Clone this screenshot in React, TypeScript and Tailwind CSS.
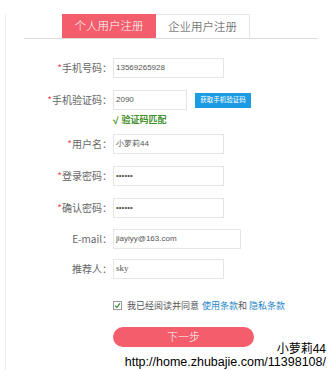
import React from "react";

const cjk = "font-['Microsoft_YaHei','Noto_Sans_CJK_SC',sans-serif]";

function Row({
  label,
  req,
  value,
  w = "w-[111px]",
  mt,
  serif,
}: {
  label: string;
  req?: boolean;
  value: string;
  w?: string;
  mt: string;
  serif?: boolean;
}) {
  return (
    <div className={`flex items-center ${mt}`}>
      <div className="w-[107px] pr-[1px] text-right text-[10px] leading-none text-[#666]">
        {req && <span className="text-[#e94b5b]">*</span>}
        {label}
      </div>
      <div
        className={`${w} h-[20px] border border-[#e6e6e6] flex items-center pl-[2px] text-[8px] text-[#555] ${
          serif ? "font-['Liberation_Serif',serif] text-[9px]" : "font-['Liberation_Sans',sans-serif]"
        }`}
      >
        {value}
      </div>
    </div>
  );
}

export default function App() {
  return (
    <div className={`relative w-[336px] h-[370px] bg-white overflow-hidden ${cjk}`}>
      <div className="ml-[5px] h-[370px] border-l border-[#f0f0f0]">
        {/* tabs */}
        <div className="mx-[18px] mt-[14px] border-b border-[#dcdcdc] flex pl-[38px]">
          <div className="w-[94px] h-[24px] bg-[#f45d6b] text-white text-[11.5px] font-light flex items-center justify-center">
            个人用户注册
          </div>
          <div className="w-[94px] h-[24px] border-t border-r border-[#e6e6e6] text-[#444] text-[11.5px] font-light flex items-center justify-center">
            企业用户注册
          </div>
        </div>

        {/* form */}
        <Row mt="mt-[19px]" req label="手机号码：" value="13569265928" />
        <div className="flex items-center mt-[12px]">
          <div className="w-[107px] pr-[1px] text-right text-[10px] leading-none text-[#666]">
            <span className="text-[#e94b5b]">*</span>手机验证码：
          </div>
          <div className="w-[74px] h-[20px] border border-[#e6e6e6] flex items-center pl-[2px] text-[8px] text-[#555] font-['Liberation_Sans',sans-serif]">
            2090
          </div>
          <div className="ml-[8px] w-[56px] h-[15px] bg-[#1b9be3] text-white text-[6.5px] flex items-center justify-center">
            获取手机验证码
          </div>
        </div>
        <div className="ml-[107px] mt-[4px] h-[12px] flex items-center text-[9px] font-bold text-[#3f8f2a]">
          <span className="font-['Liberation_Sans',sans-serif] text-[10px]">√</span>
          <span className="ml-[3px]">验证码匹配</span>
        </div>
        <Row mt="mt-[8px]" req label="用户名：" value="小萝莉44" />
        <Row mt="mt-[12px]" req label="登录密码：" value="••••••" />
        <Row mt="mt-[12px]" req label="确认密码：" value="••••••" />
        <Row mt="mt-[11px]" label="E-mail：" value="jiayiyy@163.com" w="w-[128px]" />
        <Row mt="mt-[10px]" label="推荐人：" value="sky" serif />

        <div className="ml-[107px] mt-[20px] flex items-center text-[9px]">
          <div className="w-[9px] h-[9px] border border-[#999] flex items-center justify-center">
            <svg width="7" height="7" viewBox="0 0 7 7">
              <path d="M1 3.6 L2.9 5.4 L6 1.4" fill="none" stroke="#2e8b2e" strokeWidth="1.2" />
            </svg>
          </div>
          <span className="ml-[5px] text-[#555]">我已经阅读并同意</span>
          <span className="ml-[3px] text-[#1a86c8]">使用条款</span>
          <span className="text-[#555]">和</span>
          <span className="ml-[2px] text-[#1a86c8]">隐私条款</span>
        </div>

        <div className="ml-[107px] mt-[14px] w-[141px] h-[20px] rounded-full bg-[#f45d6b] text-white text-[11px] font-light flex items-center justify-center">
          下一步
        </div>
      </div>

      <div className="absolute right-[10px] bottom-[2px] text-right text-black leading-[12px] font-['Liberation_Sans','Noto_Sans_CJK_SC',sans-serif] [text-shadow:0_0_2px_#fff,0_0_2px_#fff]">
        <div className="text-[12px]">小萝莉44</div>
        <div className="text-[12.5px] mt-[1px]">http://home.zhubajie.com/11398108/</div>
      </div>
    </div>
  );
}
